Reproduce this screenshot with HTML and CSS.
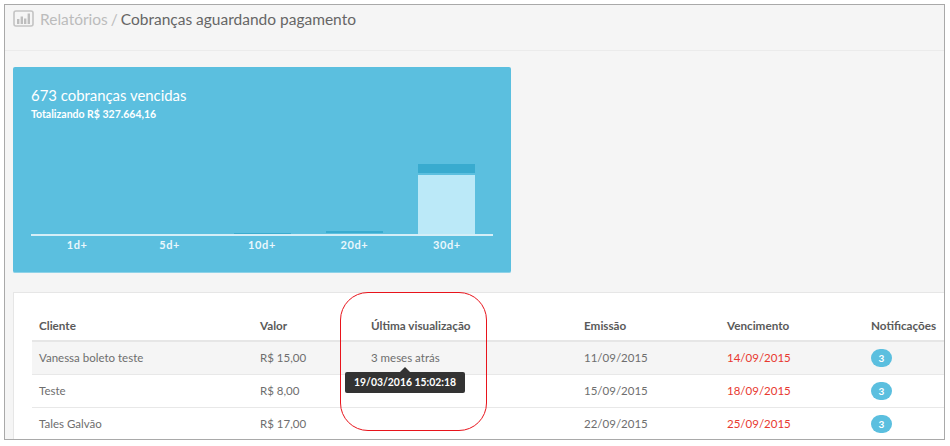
FILE: index.html
```html
<!DOCTYPE html>
<html lang="pt-BR">
<head>
<meta charset="utf-8">
<title>Cobranças aguardando pagamento</title>
<link rel="stylesheet" href="styles.css">
</head>
<body>
<div class="frame">
  <header class="page-head">
    <svg class="head-icon" width="21" height="17" viewBox="0 0 21 17" aria-hidden="true">
      <rect x="1" y="1" width="19" height="15" rx="2" fill="none" stroke="#c4c4c4" stroke-width="1.6"/>
      <rect x="4" y="9" width="2.4" height="5" fill="#bdbdbd"/>
      <rect x="7.6" y="6.5" width="2.4" height="7.5" fill="#bdbdbd"/>
      <rect x="11" y="8.5" width="2.4" height="5.5" fill="#bdbdbd"/>
      <rect x="14.6" y="3.5" width="2.4" height="10.5" fill="#bdbdbd"/>
    </svg>
    <h1 class="crumbs"><span class="crumb-root">Relatórios /</span> Cobranças aguardando pagamento</h1>
  </header>

  <div class="content">
    <section class="chart-card">
      <h2 class="chart-title">673 cobranças vencidas</h2>
      <p class="chart-sub">Totalizando R$ 327.664,16</p>
      <div class="plot">
        <div class="slot"></div>
        <div class="slot"></div>
        <div class="slot"><div class="bar-dark bar-hair"></div></div>
        <div class="slot"><div class="bar-dark bar-thin"></div></div>
        <div class="slot"><div class="bar-dark bar-top"></div><div class="bar-light"></div></div>
      </div>
      <div class="axis">
        <span>1d+</span><span>5d+</span><span>10d+</span><span>20d+</span><span>30d+</span>
      </div>
    </section>

    <section class="table-card">
      <table class="charges">
        <colgroup>
          <col class="c1"><col class="c2"><col class="c3"><col class="c4"><col class="c5"><col class="c6">
        </colgroup>
        <thead>
          <tr><th>Cliente</th><th>Valor</th><th>Última visualização</th><th>Emissão</th><th>Vencimento</th><th>Notificações</th></tr>
        </thead>
        <tbody>
          <tr class="hover"><td>Vanessa boleto teste</td><td>R$ 15,00</td><td>3 meses atrás</td><td>11/09/2015</td><td class="due">14/09/2015</td><td><span class="badge">3</span></td></tr>
          <tr><td>Teste</td><td>R$ 8,00</td><td></td><td>15/09/2015</td><td class="due">18/09/2015</td><td><span class="badge">3</span></td></tr>
          <tr><td>Tales Galvão</td><td>R$ 17,00</td><td></td><td>22/09/2015</td><td class="due">25/09/2015</td><td><span class="badge">3</span></td></tr>
        </tbody>
      </table>
    </section>
  </div>

  <div class="tooltip">19/03/2016 15:02:18</div>
  <div class="callout"></div>
</div>
</body>
</html>
```

FILE: styles.css
```css
* { box-sizing: border-box; }
html, body { margin: 0; padding: 0; background: #fff; }
body { font-family: Lato, "Open Sans", sans-serif; color: #666; }

.frame {
  position: relative;
  width: 941px;
  height: 436px;
  margin: 4px 0 0 4px;
  border: 1px solid #a9a9a9;
  background: #f5f5f5;
  overflow: hidden;
}

.page-head {
  display: flex;
  align-items: flex-start;
  gap: 6px;
  height: 46px;
  padding: 5px 8px 0;
  border-bottom: 1px solid #ebebeb;
}
.head-icon { flex: none; }
.crumbs { margin: -1px 0 0; font-size: 15.5px; font-weight: 400; line-height: 20px; color: #666; white-space: nowrap; }
.crumb-root { color: #bcbcbc; margin-right: -1px; word-spacing: -1px; }

.content { padding: 16px 0 0 8px; }

.chart-card {
  width: 498px;
  height: 206px;
  padding: 18px 18px 0;
  background: #5bbfdf;
  border-radius: 2px;
  border-bottom: 1px solid #8ed2e8;
  color: #fff;
}
.chart-title { margin: 0; font-size: 14.9px; font-weight: 400; line-height: 20px; }
.chart-sub { margin: 2px 0 0; font-size: 10.5px; font-weight: 700; line-height: 15px; }

.plot {
  display: flex;
  align-items: stretch;
  height: 106px;
  margin-top: 8px;
  border-bottom: 2px solid #d5eef7;
}
.slot {
  flex: 1;
  display: flex;
  flex-direction: column;
  justify-content: flex-end;
  align-items: center;
}
.bar-dark { width: 57px; background: #39abcf; }
.bar-hair { height: 1px; }
.bar-thin { height: 2px; margin-bottom: 1px; }
.bar-top { height: 9px; margin-bottom: 2px; }
.bar-light { width: 57px; height: 59px; background: #bbe9f8; }

.axis { display: flex; margin-top: 2px; }
.axis span {
  flex: 1;
  text-align: center;
  font-size: 11px;
  font-weight: 700;
  letter-spacing: 0.6px;
  line-height: 14px;
  color: #eaf7fc;
}

.table-card {
  margin-top: 19px;
  padding: 17px 0 0 18px;
  height: 150px;
  background: #fff;
  border: 1px solid #e6e6e6;
  border-width: 1px 0 0 1px;
}

.charges {
  width: 912px;
  table-layout: fixed;
  border-collapse: collapse;
  font-size: 11.5px;
}
.c1 { width: 221px; }
.c2 { width: 111px; }
.c3 { width: 213px; }
.c4 { width: 143px; }
.c5 { width: 144px; }
.c6 { width: 80px; }

.charges th {
  height: 31px;
  padding: 0 7px;
  text-align: left;
  font-size: 11.7px;
  font-weight: 700;
  color: #5a5a5a;
  border-bottom: 2px solid #e6e6e6;
  white-space: nowrap;
}
.charges td {
  height: 33px;
  padding: 0 7px;
  color: #6e6e6e;
  border-bottom: 1px solid #e8e8e8;
}
.hover td { background: #f5f5f5; }
.charges td.due { color: #e8392f; font-weight: 400; }

.badge {
  display: inline-block;
  width: 21px;
  height: 18px;
  border-radius: 9px;
  background: #5bbfdf;
  color: #fff;
  font-size: 10px;
  font-weight: 700;
  line-height: 18px;
  text-align: center;
  vertical-align: middle;
}

.tooltip {
  position: absolute;
  left: 340px;
  top: 367px;
  width: 120px;
  height: 21px;
  border-radius: 2px;
  background: #333;
  color: #fff;
  font-size: 10.4px;
  font-weight: 700;
  line-height: 20px;
  text-align: center;
}
.tooltip::before {
  content: "";
  position: absolute;
  left: 55px;
  top: -5px;
  border: 5px solid transparent;
  border-top: 0;
  border-bottom-color: #333;
}

.callout {
  position: absolute;
  left: 335px;
  top: 287px;
  width: 147px;
  height: 139px;
  border: 1px solid #e8141c;
  border-radius: 28px;
}
```
